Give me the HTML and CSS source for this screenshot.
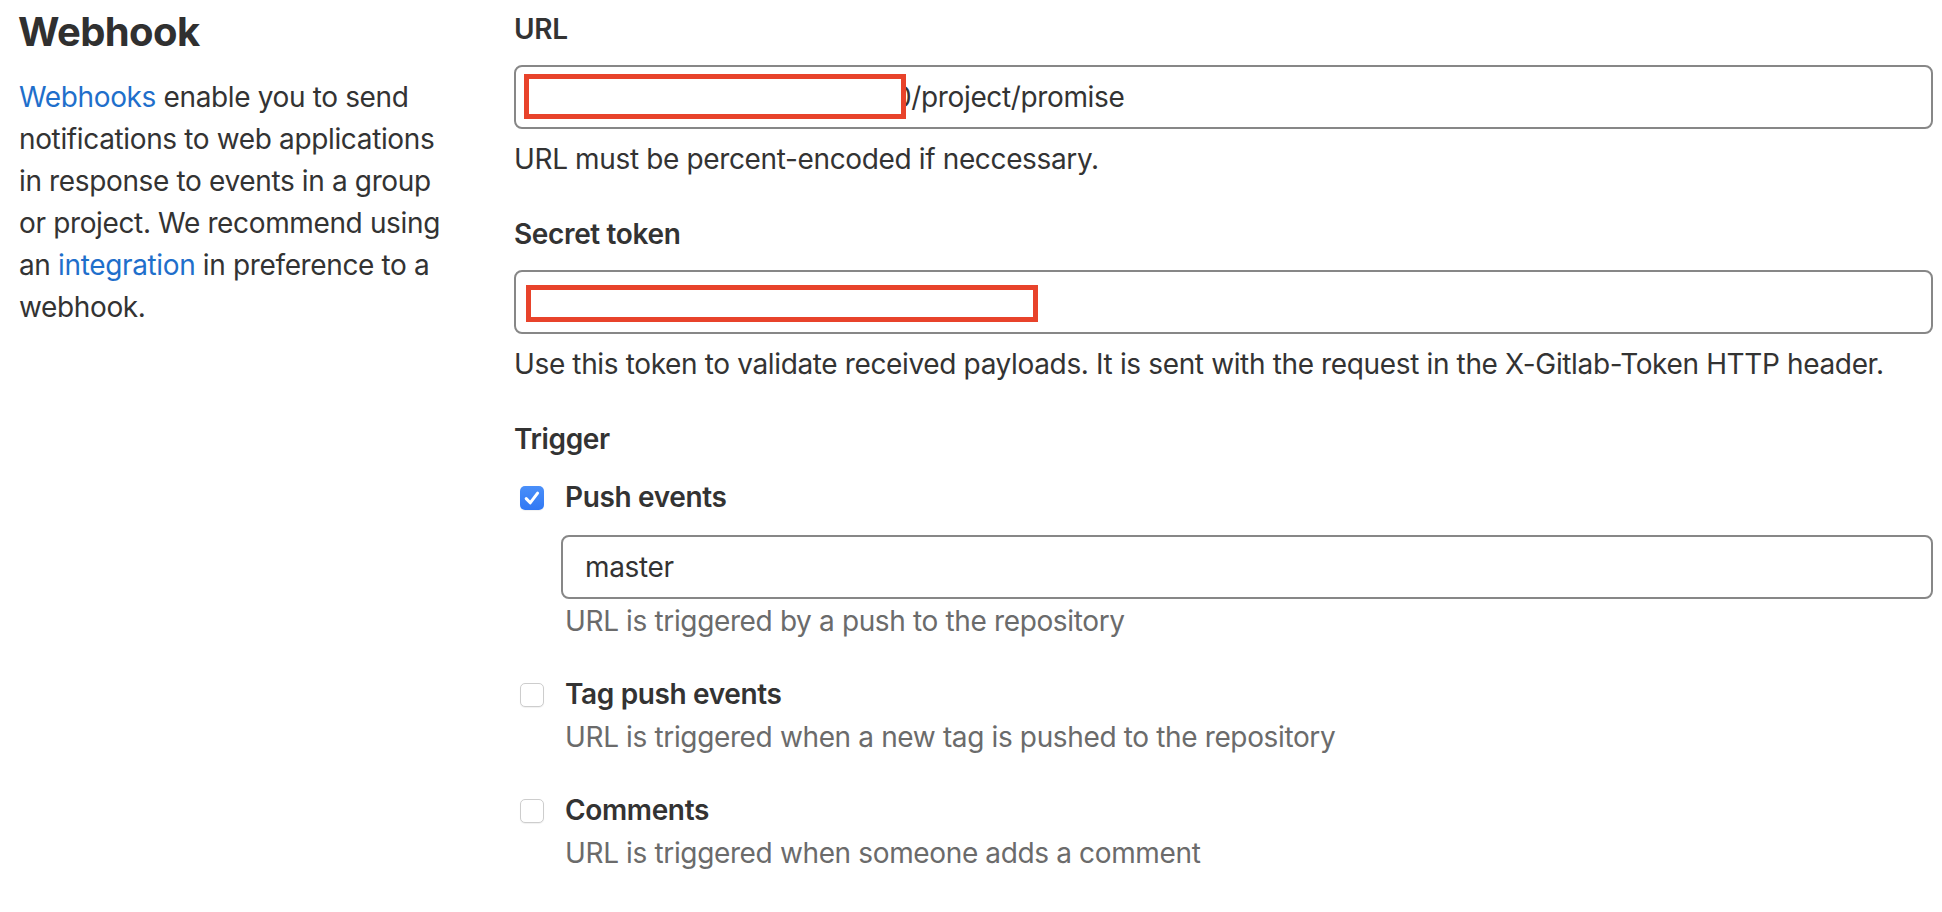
FILE: index.html
```html
<!DOCTYPE html>
<html lang="en">
<head>
<meta charset="utf-8">
<title>Webhook settings</title>
<link rel="stylesheet" href="styles.css">
</head>
<body>
<main class="settings">
  <section class="intro">
    <h4 class="intro-title">Webhook</h4>
    <p class="intro-text"><a class="link" href="#">Webhooks</a> enable you to send notifications to web applications in response to events in a group or project. We recommend using an <a class="link" href="#">integration</a> in preference to a webhook.</p>
  </section>

  <form class="hook-form">
    <div class="form-group">
      <label class="label" for="hook-url">URL</label>
      <div class="field">
        <input id="hook-url" class="input input-url" type="text" value="0/project/promise">
        <span class="redact redact-url"></span>
      </div>
      <p class="help">URL must be percent-encoded if neccessary.</p>
    </div>

    <div class="form-group">
      <label class="label" for="hook-token">Secret token</label>
      <div class="field">
        <input id="hook-token" class="input" type="text" value="">
        <span class="redact redact-token"></span>
      </div>
      <p class="help">Use this token to validate received payloads. It is sent with the request in the X-Gitlab-Token HTTP header.</p>
    </div>

    <div class="triggers">
      <div class="label label-trigger">Trigger</div>

      <div class="check">
        <span class="box box-checked">
          <svg viewBox="0 0 24 24" width="24" height="24" aria-hidden="true"><path d="M6.2 12.6 L10.2 16.8 L17.6 7.2" fill="none" stroke="#fff" stroke-width="3" stroke-linecap="round" stroke-linejoin="round"/></svg>
        </span>
        <div class="check-body">
          <div class="check-label">Push events</div>
          <input class="input input-branch" type="text" value="master">
          <p class="help muted help-tight">URL is triggered by a push to the repository</p>
        </div>
      </div>

      <div class="check">
        <span class="box"></span>
        <div class="check-body">
          <div class="check-label">Tag push events</div>
          <p class="help muted help-tight">URL is triggered when a new tag is pushed to the repository</p>
        </div>
      </div>

      <div class="check">
        <span class="box"></span>
        <div class="check-body">
          <div class="check-label">Comments</div>
          <p class="help muted help-tight">URL is triggered when someone adds a comment</p>
        </div>
      </div>
    </div>
  </form>
</main>
</body>
</html>
```

FILE: styles.css
```css
* {
  box-sizing: border-box;
}

html, body {
  margin: 0;
  padding: 0;
  background: #ffffff;
}

body {
  font-family: Inter, "Noto Sans", "Liberation Sans", sans-serif;
  font-size: 28px;
  line-height: 42px;
  letter-spacing: -0.36px;
  color: #333333;
}

.settings {
  display: grid;
  grid-template-columns: 494px 1fr;
  padding: 0 9px 0 20px;
}

/* left column */
.intro {
  padding-top: 8px;
}

.intro-title {
  margin: 0 0 0 -2px;
  font-size: 40px;
  line-height: 48px;
  font-weight: 700;
  color: #303030;
  letter-spacing: -0.6px;
}

.intro-text {
  margin: 20px 0 0 -1px;
  max-width: 434px;
}

.link {
  color: #1f6fcb;
  text-decoration: none;
}

/* right column */
.hook-form {
  padding-top: 8px;
}

.form-group {
  margin-bottom: 33px;
}

.label {
  display: block;
  font-weight: 600;
  margin-bottom: 15px;
}

.label-trigger {
  margin-bottom: 16px;
}

.field {
  position: relative;
}

.input {
  display: block;
  width: 100%;
  height: 64px;
  margin: 0;
  padding: 0 22px;
  border: 2px solid #878787;
  border-radius: 8px;
  background: #ffffff;
  font-family: inherit;
  font-size: 28px;
  letter-spacing: inherit;
  color: #333333;
  outline: none;
}

.input-url {
  text-indent: 356px;
}

.redact {
  position: absolute;
  border: 5px solid #e8432b;
  background: #ffffff;
}

.redact-url {
  left: 10px;
  top: 9px;
  width: 382px;
  height: 45px;
}

.redact-token {
  left: 12px;
  top: 15px;
  width: 512px;
  height: 37px;
}

.help {
  margin: 9px 0 0;
  color: #333333;
}

.help.muted {
  color: #6b6b6b;
}

.help-tight {
  margin-top: 1px;
}

/* checkboxes */
.check {
  display: grid;
  grid-template-columns: 47px 1fr;
  margin-bottom: 31px;
}

.box {
  display: block;
  width: 24px;
  height: 24px;
  margin: 10px 0 0 6px;
  border: 1px solid #cdcdcd;
  border-radius: 5px;
  background: #ffffff;
  box-shadow: 0 1px 1px rgba(0, 0, 0, 0.06);
}

.box-checked {
  border: none;
  background: linear-gradient(#4a8ff9, #3178f4);
}

.box svg {
  display: block;
}

.check-label,
.check-body .help {
  padding-left: 4px;
}

.check-label {
  font-weight: 600;
}

.input-branch {
  margin-top: 17px;
}
```
